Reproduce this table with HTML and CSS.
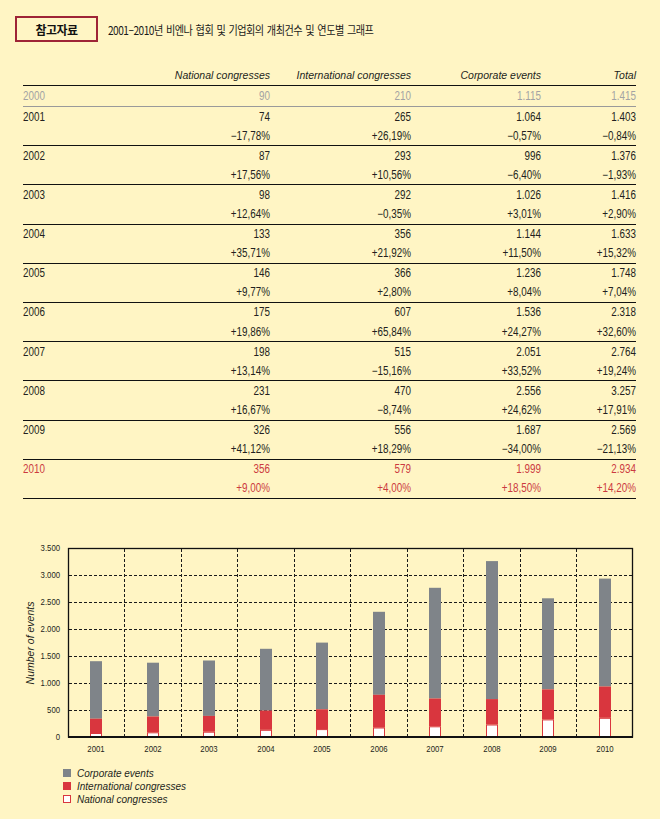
FILE: index.html
```html
<!DOCTYPE html>
<html lang="ko">
<head>
<meta charset="utf-8">
<link rel="stylesheet" href="styles.css">
</head>
<body>
<header class="top">
  <div class="tag">참고자료</div>
  <div class="title">2001–2010년 비엔나 협회 및 기업회의 개최건수 및 연도별 그래프</div>
</header>

<section class="tbl">
  <div class="row head"><span></span><span>National congresses</span><span>International congresses</span><span>Corporate events</span><span>Total</span></div>
  <div class="row base"><span>2000</span><span>90</span><span>210</span><span>1.115</span><span>1.415</span></div>
  <div class="block">
    <div class="row"><span>2001</span><span>74</span><span>265</span><span>1.064</span><span>1.403</span></div>
    <div class="row"><span></span><span>−17,78%</span><span>+26,19%</span><span>−0,57%</span><span>−0,84%</span></div>
  </div>
  <div class="block">
    <div class="row"><span>2002</span><span>87</span><span>293</span><span>996</span><span>1.376</span></div>
    <div class="row"><span></span><span>+17,56%</span><span>+10,56%</span><span>−6,40%</span><span>−1,93%</span></div>
  </div>
  <div class="block">
    <div class="row"><span>2003</span><span>98</span><span>292</span><span>1.026</span><span>1.416</span></div>
    <div class="row"><span></span><span>+12,64%</span><span>−0,35%</span><span>+3,01%</span><span>+2,90%</span></div>
  </div>
  <div class="block">
    <div class="row"><span>2004</span><span>133</span><span>356</span><span>1.144</span><span>1.633</span></div>
    <div class="row"><span></span><span>+35,71%</span><span>+21,92%</span><span>+11,50%</span><span>+15,32%</span></div>
  </div>
  <div class="block">
    <div class="row"><span>2005</span><span>146</span><span>366</span><span>1.236</span><span>1.748</span></div>
    <div class="row"><span></span><span>+9,77%</span><span>+2,80%</span><span>+8,04%</span><span>+7,04%</span></div>
  </div>
  <div class="block">
    <div class="row"><span>2006</span><span>175</span><span>607</span><span>1.536</span><span>2.318</span></div>
    <div class="row"><span></span><span>+19,86%</span><span>+65,84%</span><span>+24,27%</span><span>+32,60%</span></div>
  </div>
  <div class="block">
    <div class="row"><span>2007</span><span>198</span><span>515</span><span>2.051</span><span>2.764</span></div>
    <div class="row"><span></span><span>+13,14%</span><span>−15,16%</span><span>+33,52%</span><span>+19,24%</span></div>
  </div>
  <div class="block">
    <div class="row"><span>2008</span><span>231</span><span>470</span><span>2.556</span><span>3.257</span></div>
    <div class="row"><span></span><span>+16,67%</span><span>−8,74%</span><span>+24,62%</span><span>+17,91%</span></div>
  </div>
  <div class="block">
    <div class="row"><span>2009</span><span>326</span><span>556</span><span>1.687</span><span>2.569</span></div>
    <div class="row"><span></span><span>+41,12%</span><span>+18,29%</span><span>−34,00%</span><span>−21,13%</span></div>
  </div>
  <div class="block last">
    <div class="row"><span>2010</span><span>356</span><span>579</span><span>1.999</span><span>2.934</span></div>
    <div class="row"><span></span><span>+9,00%</span><span>+4,00%</span><span>+18,50%</span><span>+14,20%</span></div>
  </div>
</section>

<svg class="chart" width="660" height="220" viewBox="0 0 660 220">
  <g class="grid">
    <line x1="69" y1="36.5" x2="632" y2="36.5"/>
    <line x1="69" y1="63.5" x2="632" y2="63.5"/>
    <line x1="69" y1="90.5" x2="632" y2="90.5"/>
    <line x1="69" y1="117.5" x2="632" y2="117.5"/>
    <line x1="69" y1="144.5" x2="632" y2="144.5"/>
    <line x1="69" y1="171.5" x2="632" y2="171.5"/>
    <line x1="124.5" y1="10" x2="124.5" y2="200"/>
    <line x1="181.5" y1="10" x2="181.5" y2="200"/>
    <line x1="237.5" y1="10" x2="237.5" y2="200"/>
    <line x1="294.5" y1="10" x2="294.5" y2="200"/>
    <line x1="350.5" y1="10" x2="350.5" y2="200"/>
    <line x1="407.5" y1="10" x2="407.5" y2="200"/>
    <line x1="463.5" y1="10" x2="463.5" y2="200"/>
    <line x1="520.5" y1="10" x2="520.5" y2="200"/>
    <line x1="576.5" y1="10" x2="576.5" y2="200"/>
  </g>

  <g class="bars">
    <rect class="corp" x="90" y="122.2" width="12" height="57.5"/>
    <rect class="intl" x="90" y="179.7" width="12" height="14.3"/>
    <rect class="nat" x="90.5" y="194.5" width="11" height="3"/>

    <rect class="corp" x="147" y="123.7" width="12" height="53.8"/>
    <rect class="intl" x="147" y="177.5" width="12" height="15.8"/>
    <rect class="nat" x="147.5" y="193.8" width="11" height="3.7"/>

    <rect class="corp" x="203" y="121.5" width="12" height="55.4"/>
    <rect class="intl" x="203" y="176.9" width="12" height="15.8"/>
    <rect class="nat" x="203.5" y="193.2" width="11" height="4.3"/>

    <rect class="corp" x="260" y="109.8" width="12" height="61.8"/>
    <rect class="intl" x="260" y="171.6" width="12" height="19.2"/>
    <rect class="nat" x="260.5" y="191.3" width="11" height="6.2"/>

    <rect class="corp" x="316" y="103.6" width="12" height="66.7"/>
    <rect class="intl" x="316" y="170.3" width="12" height="19.8"/>
    <rect class="nat" x="316.5" y="190.6" width="11" height="6.9"/>

    <rect class="corp" x="373" y="72.8" width="12" height="83"/>
    <rect class="intl" x="373" y="155.8" width="12" height="32.8"/>
    <rect class="nat" x="373.5" y="189" width="11" height="8.5"/>

    <rect class="corp" x="429" y="48.8" width="12" height="110.7"/>
    <rect class="intl" x="429" y="159.5" width="12" height="27.8"/>
    <rect class="nat" x="429.5" y="187.8" width="11" height="9.7"/>

    <rect class="corp" x="486" y="22.1" width="12" height="138"/>
    <rect class="intl" x="486" y="160.1" width="12" height="25.4"/>
    <rect class="nat" x="486.5" y="186" width="11" height="11.5"/>

    <rect class="corp" x="542" y="59.3" width="12" height="91.1"/>
    <rect class="intl" x="542" y="150.4" width="12" height="30"/>
    <rect class="nat" x="542.5" y="180.9" width="11" height="16.6"/>

    <rect class="corp" x="599" y="39.6" width="12" height="107.9"/>
    <rect class="intl" x="599" y="147.5" width="12" height="31.3"/>
    <rect class="nat" x="599.5" y="179.3" width="11" height="18.2"/>
  </g>

  <rect class="frame" x="68.5" y="9.5" width="564" height="188.5"/>
  <line class="axis" x1="68" y1="198" x2="633" y2="198"/>

  <g class="ylab">
    <text x="60" y="9">3.500</text>
    <text x="60" y="36">3.000</text>
    <text x="60" y="63">2.500</text>
    <text x="60" y="90">2.000</text>
    <text x="60" y="117">1.500</text>
    <text x="60" y="144">1.000</text>
    <text x="60" y="171">500</text>
    <text x="60" y="198">0</text>
  </g>

  <g class="xlab">
    <text x="96" y="210">2001</text>
    <text x="153" y="210">2002</text>
    <text x="209" y="210">2003</text>
    <text x="266" y="210">2004</text>
    <text x="322" y="210">2005</text>
    <text x="379" y="210">2006</text>
    <text x="435" y="210">2007</text>
    <text x="492" y="210">2008</text>
    <text x="548" y="210">2009</text>
    <text x="605" y="210">2010</text>
  </g>

  <text class="ytitle" transform="translate(30 104) rotate(-90)">Number of events</text>
</svg>

<ul class="legend">
  <li><i class="sw corp-sw"></i>Corporate events</li>
  <li><i class="sw intl-sw"></i>International congresses</li>
  <li><i class="sw nat-sw"></i>National congresses</li>
</ul>
</body>
</html>
```

FILE: styles.css
```css
html, body {
  margin: 0;
  padding: 0;
  background: #fff5c4;
}
body {
  width: 660px;
  height: 819px;
  overflow: hidden;
  color: #231f20;
  font-family: "Liberation Sans", Arial, sans-serif;
}

.top {
  display: flex;
  align-items: center;
  padding: 16px 0 0 15px;
}
.tag {
  box-sizing: border-box;
  width: 83px;
  height: 26px;
  border: 2px solid #9e2436;
  display: flex;
  align-items: center;
  justify-content: center;
  font-family: "Noto Sans CJK KR", sans-serif;
  font-weight: 700;
  font-size: 12px;
  letter-spacing: -0.6px;
  color: #111;
}
.title {
  margin-left: 10px;
  font-family: "Noto Sans CJK KR", sans-serif;
  font-size: 12px;
  letter-spacing: -0.6px;
  word-spacing: 1px;
  color: #1a1a1a;
  transform: scaleX(0.845);
  transform-origin: left center;
  white-space: nowrap;
}

.tbl {
  margin: 24px 0 0 23px;
  width: 613px;
  font-family: "Liberation Sans", Arial, sans-serif;
  font-size: 12px;
}
.row {
  display: grid;
  grid-template-columns: 137px 110px 141px 130px 95px;
  height: 19.1px;
  align-items: center;
  line-height: 1;
}
.row span {
  transform: scaleX(0.82);
  transform-origin: right center;
  text-align: right;
  white-space: nowrap;
}
.row span:first-child {
  transform-origin: left center;
  text-align: left;
}
.head {
  height: 19px;
  border-bottom: 1px solid #111;
  font-style: italic;
  font-size: 10.5px;
}
.head span {
  transform: none;
}
.base {
  height: 20px;
  border-bottom: 1px solid #9a9a9a;
  color: #a3a3a3;
}
.block {
  border-bottom: 1px solid #111;
}
.block.last {
  color: #cc3a3f;
}

.chart {
  display: block;
  margin-top: 40px;
}
.grid line {
  stroke: #1a1a1a;
  stroke-width: 1;
  stroke-dasharray: 3 2;
}
.corp { fill: #7f8489; }
.intl { fill: #d9363e; }
.nat { fill: #ffffff; stroke: #d9363e; stroke-width: 1; }
.frame {
  fill: none;
  stroke: #111;
  stroke-width: 1.3;
}
.axis {
  stroke: #111;
  stroke-width: 2;
}
.ylab text,
.xlab text {
  font-family: "Liberation Sans", Arial, sans-serif;
  font-size: 9.5px;
  dominant-baseline: central;
  fill: #231f20;
  transform-box: fill-box;
}
.ylab text {
  text-anchor: end;
  transform-origin: right center;
  transform: scaleX(0.82);
}
.xlab text {
  text-anchor: middle;
  transform-origin: center;
  transform: scaleX(0.82);
}
.ytitle {
  font-family: "Liberation Sans", Arial, sans-serif;
  font-style: italic;
  font-size: 10.5px;
  text-anchor: middle;
  dominant-baseline: central;
  fill: #231f20;
}

.legend {
  list-style: none;
  margin: 8px 0 0 63px;
  padding: 0;
  font-family: "Liberation Sans", Arial, sans-serif;
  font-style: italic;
  font-size: 10px;
}
.legend li {
  display: flex;
  align-items: center;
  height: 13px;
  gap: 6px;
}
.sw {
  box-sizing: border-box;
  width: 8px;
  height: 8px;
}
.corp-sw { background: #7f8489; }
.intl-sw { background: #d9363e; }
.nat-sw { background: #fff; border: 1px solid #d9363e; }
```
